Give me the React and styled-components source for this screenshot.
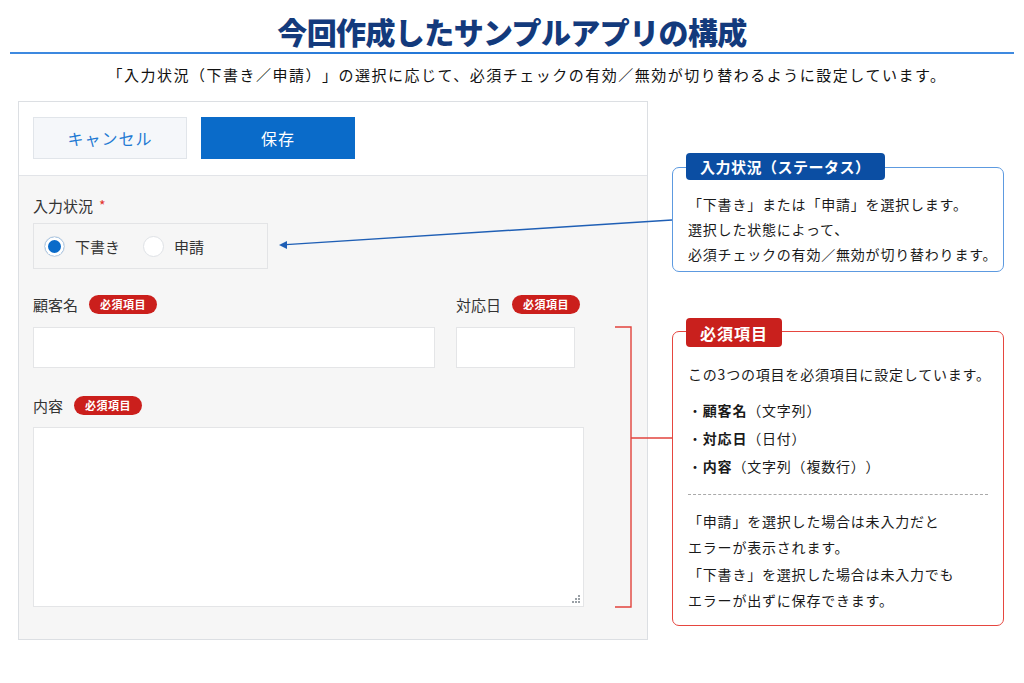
import React from "react";
import styled, { createGlobalStyle } from "styled-components";

const Global = createGlobalStyle`
  html, body { margin: 0; padding: 0; background: #ffffff; }
  body {
    font-family: "Noto Sans CJK JP", "Noto Sans", "Liberation Sans", sans-serif;
    color: #222;
    width: 1024px;
    height: 683px;
    overflow: hidden;
    text-spacing-trim: space-all;
  }
  * { box-sizing: border-box; }
`;

const Page = styled.div`
  width: 1024px;
  height: 683px;
  display: flex;
  flex-direction: column;
`;

const Title = styled.h1`
  margin: 11px 0 0;
  height: 41px;
  line-height: 40px;
  font-size: 30px;
  font-weight: 900;
  letter-spacing: -0.6px;
  text-align: center;
  color: #133a7c;
`;

const Rule = styled.div`
  margin: 0 10px;
  height: 2px;
  background: linear-gradient(90deg, #3f8ae0 0%, #1e74d6 50%, #3f8ae0 100%);
`;

const Subtitle = styled.p`
  margin: 9px 0 0;
  padding-left: 30px;
  height: 24px;
  line-height: 24px;
  font-size: 15px;
  letter-spacing: 1.5px;
  text-align: center;
  color: #111;
`;

const Main = styled.div`
  position: relative;
  margin-top: 14px;
  display: flex;
  gap: 24px;
  padding-left: 18px;
`;

const Panel = styled.div`
  width: 630px;
  height: 539px;
  border: 1px solid #dcdfe3;
  background: #f6f6f6;
  display: flex;
  flex-direction: column;
`;

const TopBar = styled.div`
  height: 74px;
  background: #ffffff;
  border-bottom: 1px solid #e2e4e8;
  padding: 15px 14px 0;
  display: flex;
  gap: 14px;
  align-items: flex-start;
`;

const Button = styled.button`
  width: 154px;
  height: 42px;
  font-family: inherit;
  font-size: 16px;
  letter-spacing: 1px;
  border: 1px solid ${(p) => (p.$primary ? "#0a6bc9" : "#e1e5ea")};
  background: ${(p) => (p.$primary ? "#0a6bc9" : "#f5f7fa")};
  color: ${(p) => (p.$primary ? "#ffffff" : "#1f7ad3")};
  cursor: pointer;
`;

const Body = styled.div`
  padding: 18px 14px 0;
  display: flex;
  flex-direction: column;
`;

const Label = styled.div`
  display: flex;
  align-items: center;
  gap: 11px;
  height: 22px;
  font-size: 15px;
  color: #333;
  margin-top: ${(p) => p.$mt || 0}px;
`;

const Star = styled.span`
  color: #e2312b;
  font-size: 14px;
  margin-left: -5px;
`;

const Badge = styled.span`
  width: 68px;
  height: 19px;
  border-radius: 10px;
  background: #cb1f1c;
  color: #fff;
  font-size: 11px;
  font-weight: 700;
  display: inline-flex;
  align-items: center;
  justify-content: center;
  letter-spacing: 0.5px;
`;

const RadioGroup = styled.div`
  margin-top: 7px;
  width: 235px;
  height: 46px;
  border: 1px solid #e3e4e6;
  display: flex;
  align-items: center;
  padding-left: 10px;
  gap: 23px;
`;

const RadioItem = styled.label`
  display: flex;
  align-items: center;
  gap: 10px;
  font-size: 15px;
  color: #333;
`;

const RadioCircle = styled.span`
  width: 21px;
  height: 21px;
  border-radius: 50%;
  border: 1px solid #dfe2e6;
  background: ${(p) => (p.$on ? "#0a6bc9" : "#ffffff")};
  box-shadow: ${(p) => (p.$on ? "inset 0 0 0 3px #ffffff" : "none")};
`;

const Row = styled.div`
  display: flex;
  gap: 21px;
  margin-top: 24px;
`;

const Field = styled.div`
  display: flex;
  flex-direction: column;
`;

const Input = styled.div`
  margin-top: 12px;
  width: ${(p) => p.$w}px;
  height: 41px;
  background: #fff;
  border: 1px solid #e4e5e7;
`;

const TextArea = styled.div`
  position: relative;
  margin-top: 11px;
  width: 551px;
  height: 180px;
  background: #fff;
  border: 1px solid #e4e5e7;
`;

const Grip = styled.svg`
  position: absolute;
  right: 2px;
  bottom: 2px;
`;

const Side = styled.div`
  width: 332px;
  display: flex;
  flex-direction: column;
`;

const Card = styled.div`
  position: relative;
  border: 1px solid ${(p) => p.$c};
  border-radius: 7px;
  background: #fff;
  margin-top: ${(p) => p.$mt}px;
  height: ${(p) => p.$h}px;
  padding: ${(p) => p.$pt}px 15px 0 15px;
  font-size: 14px;
  letter-spacing: 0.8px;
  color: #1a1a1a;
`;

const Tab = styled.div`
  position: absolute;
  left: 13px;
  top: ${(p) => p.$top}px;
  height: ${(p) => p.$h}px;
  padding: 0 14px;
  border-radius: 4px;
  background: ${(p) => p.$bg};
  color: #fff;
  font-size: ${(p) => p.$fs}px;
  font-weight: 700;
  letter-spacing: ${(p) => p.$ls}px;
  display: flex;
  align-items: center;
`;

const Line = styled.div`
  line-height: ${(p) => p.$lh || 25}px;
  white-space: nowrap;
`;

const Bullets = styled.div`
  margin-top: 8px;
`;

const Dashed = styled.div`
  margin: 14px 0 13px;
  border-top: 1px dashed #a9a9a9;
  width: 300px;
`;

const Overlay = styled.svg`
  position: absolute;
  left: 0;
  top: 0;
  pointer-events: none;
  overflow: visible;
`;

export default function App() {
  return (
    <Page>
      <Global />
      <Title>今回作成したサンプルアプリの構成</Title>
      <Rule />
      <Subtitle>
        「入力状況（下書き／申請）」の選択に応じて、必須チェックの有効／無効が切り替わるように設定しています。
      </Subtitle>
      <Main>
        <Panel>
          <TopBar>
            <Button>キャンセル</Button>
            <Button $primary>保存</Button>
          </TopBar>
          <Body>
            <Label>
              入力状況 <Star>*</Star>
            </Label>
            <RadioGroup>
              <RadioItem>
                <RadioCircle $on />
                下書き
              </RadioItem>
              <RadioItem>
                <RadioCircle />
                申請
              </RadioItem>
            </RadioGroup>
            <Row>
              <Field>
                <Label>
                  顧客名<Badge>必須項目</Badge>
                </Label>
                <Input $w={402} />
              </Field>
              <Field>
                <Label>
                  対応日<Badge>必須項目</Badge>
                </Label>
                <Input $w={119} />
              </Field>
            </Row>
            <Label $mt={26}>
              内容<Badge>必須項目</Badge>
            </Label>
            <TextArea>
              <Grip width="10" height="10" viewBox="0 0 10 10">
                <g fill="#9aa0a6">
                  <rect x="7" y="1" width="2" height="2" />
                  <rect x="4" y="4" width="2" height="2" />
                  <rect x="7" y="4" width="2" height="2" />
                  <rect x="1" y="7" width="2" height="2" />
                  <rect x="4" y="7" width="2" height="2" />
                  <rect x="7" y="7" width="2" height="2" />
                </g>
              </Grip>
            </TextArea>
          </Body>
        </Panel>
        <Side>
          <Card $c="#5d9ae0" $mt={66} $h={105} $pt={24}>
            <Tab $bg="#0b4ea3" $top={-15} $h={27} $fs={15} $ls={0.5}>
              入力状況（ステータス）
            </Tab>
            <Line>「下書き」または「申請」を選択します。</Line>
            <Line>選択した状態によって、</Line>
            <Line>必須チェックの有効／無効が切り替わります。</Line>
          </Card>
          <Card $c="#e6463f" $mt={59} $h={295} $pt={29}>
            <Tab $bg="#c9201d" $top={-14} $h={29} $fs={16} $ls={1}>
              必須項目
            </Tab>
            <Line $lh={27}>この3つの項目を必須項目に設定しています。</Line>
            <Bullets>
              <Line $lh={28}>
                ・<b>顧客名</b>（文字列）
              </Line>
              <Line $lh={28}>
                ・<b>対応日</b>（日付）
              </Line>
              <Line $lh={28}>
                ・<b>内容</b>（文字列（複数行））
              </Line>
            </Bullets>
            <Dashed />
            <Line $lh={26.3}>「申請」を選択した場合は未入力だと</Line>
            <Line $lh={26.3}>エラーが表示されます。</Line>
            <Line $lh={26.3}>「下書き」を選択した場合は未入力でも</Line>
            <Line $lh={26.3}>エラーが出ずに保存できます。</Line>
          </Card>
        </Side>
        <Overlay width="1024" height="582" viewBox="0 0 1024 582">
          <line x1="672" y1="119" x2="286" y2="143.6" stroke="#1f5fb5" strokeWidth="1.4" />
          <polygon points="279,144 287,140 287,148" fill="#1f5fb5" />
          <polyline
            points="615,226 631,226 631,506 615,506"
            fill="none"
            stroke="#e2433c"
            strokeWidth="1.4"
          />
          <line x1="631" y1="337" x2="672" y2="337" stroke="#e2433c" strokeWidth="1.4" />
        </Overlay>
      </Main>
    </Page>
  );
}
